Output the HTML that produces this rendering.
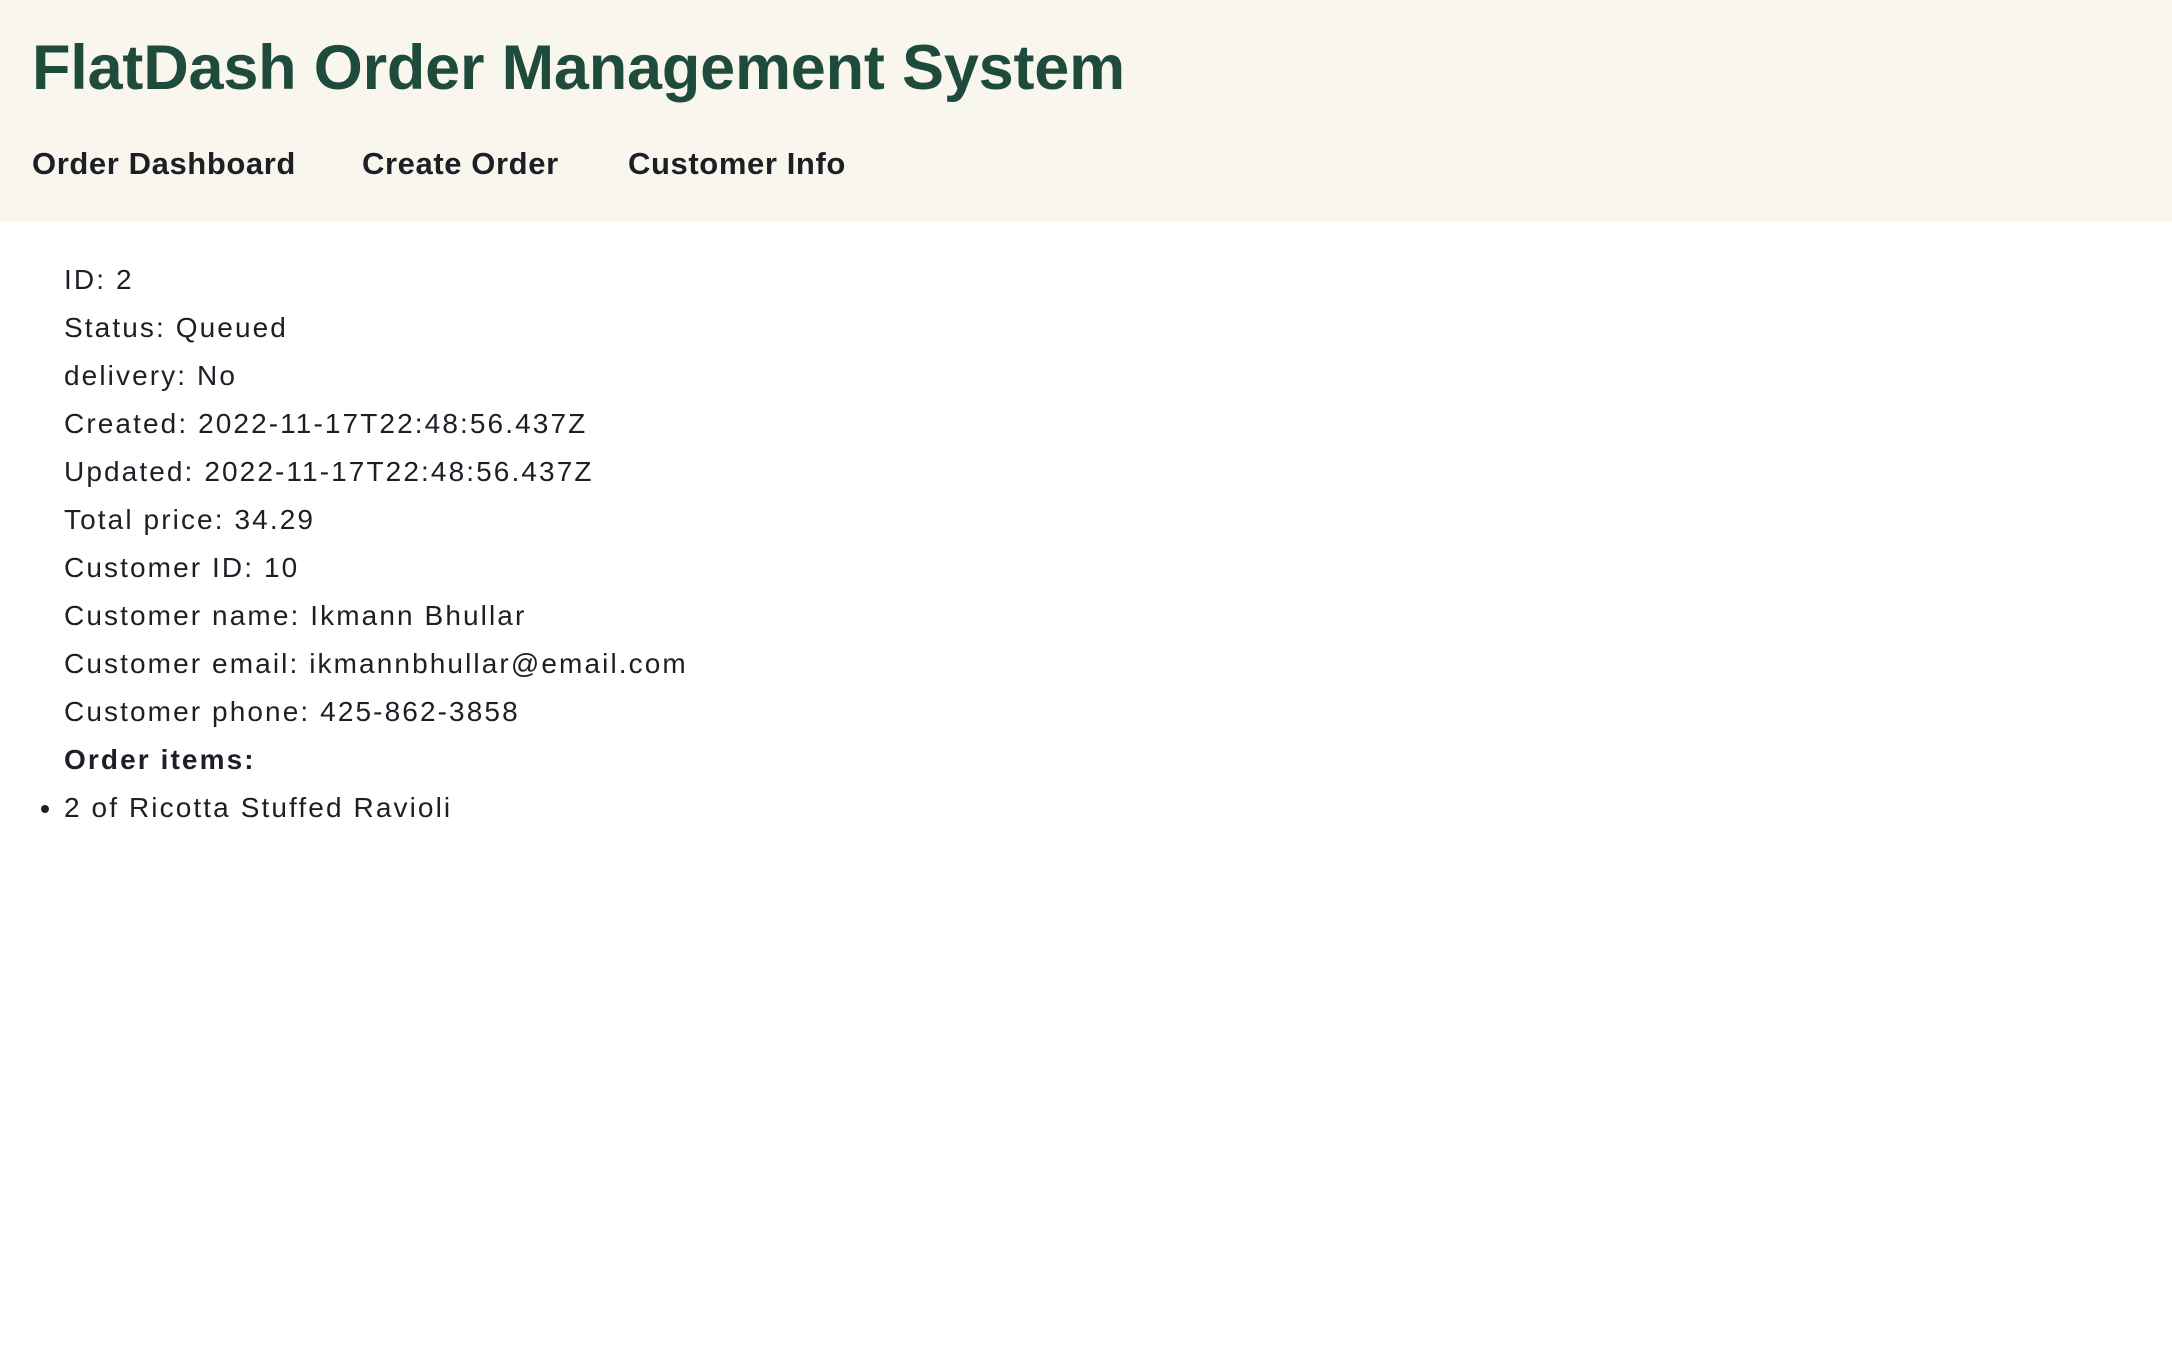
<!DOCTYPE html>
<html><head><meta charset="utf-8"><style>
body{margin:0;background:#fff;font-family:"Liberation Sans",sans-serif;color:#1e1f26;}
header{height:222px;background:#f9f6ee;position:relative;}
h1{position:absolute;left:32px;top:32px;margin:0;font-size:63px;line-height:72px;color:#1f4b3d;font-weight:bold;letter-spacing:-0.2px;white-space:nowrap;}
nav a{position:absolute;top:144px;font-size:31px;line-height:40px;font-weight:bold;color:#1e1f26;text-decoration:none;letter-spacing:0.6px;white-space:nowrap;}
.c{position:absolute;left:64px;top:256px;font-size:28px;line-height:48px;letter-spacing:2.1px;}
.c div{white-space:nowrap}
ul{margin:0;padding:0;position:absolute;left:64px;top:784px;font-size:28px;line-height:48px;letter-spacing:2.1px;white-space:nowrap;}
</style></head><body>
<header><h1>FlatDash Order Management System</h1>
<nav><a style="left:32px">Order Dashboard</a><a style="left:362px">Create Order</a><a style="left:628px">Customer Info</a></nav></header>
<div class="c">
<div>ID: 2</div><div>Status: Queued</div><div>delivery: No</div>
<div>Created: 2022-11-17T22:48:56.437Z</div><div>Updated: 2022-11-17T22:48:56.437Z</div>
<div>Total price: 34.29</div><div>Customer ID: 10</div><div>Customer name: Ikmann Bhullar</div>
<div>Customer email: ikmannbhullar@email.com</div><div>Customer phone: 425-862-3858</div>
<div><b>Order items:</b></div>
</div>
<ul><li>2 of Ricotta Stuffed Ravioli</li></ul>
</body></html>
